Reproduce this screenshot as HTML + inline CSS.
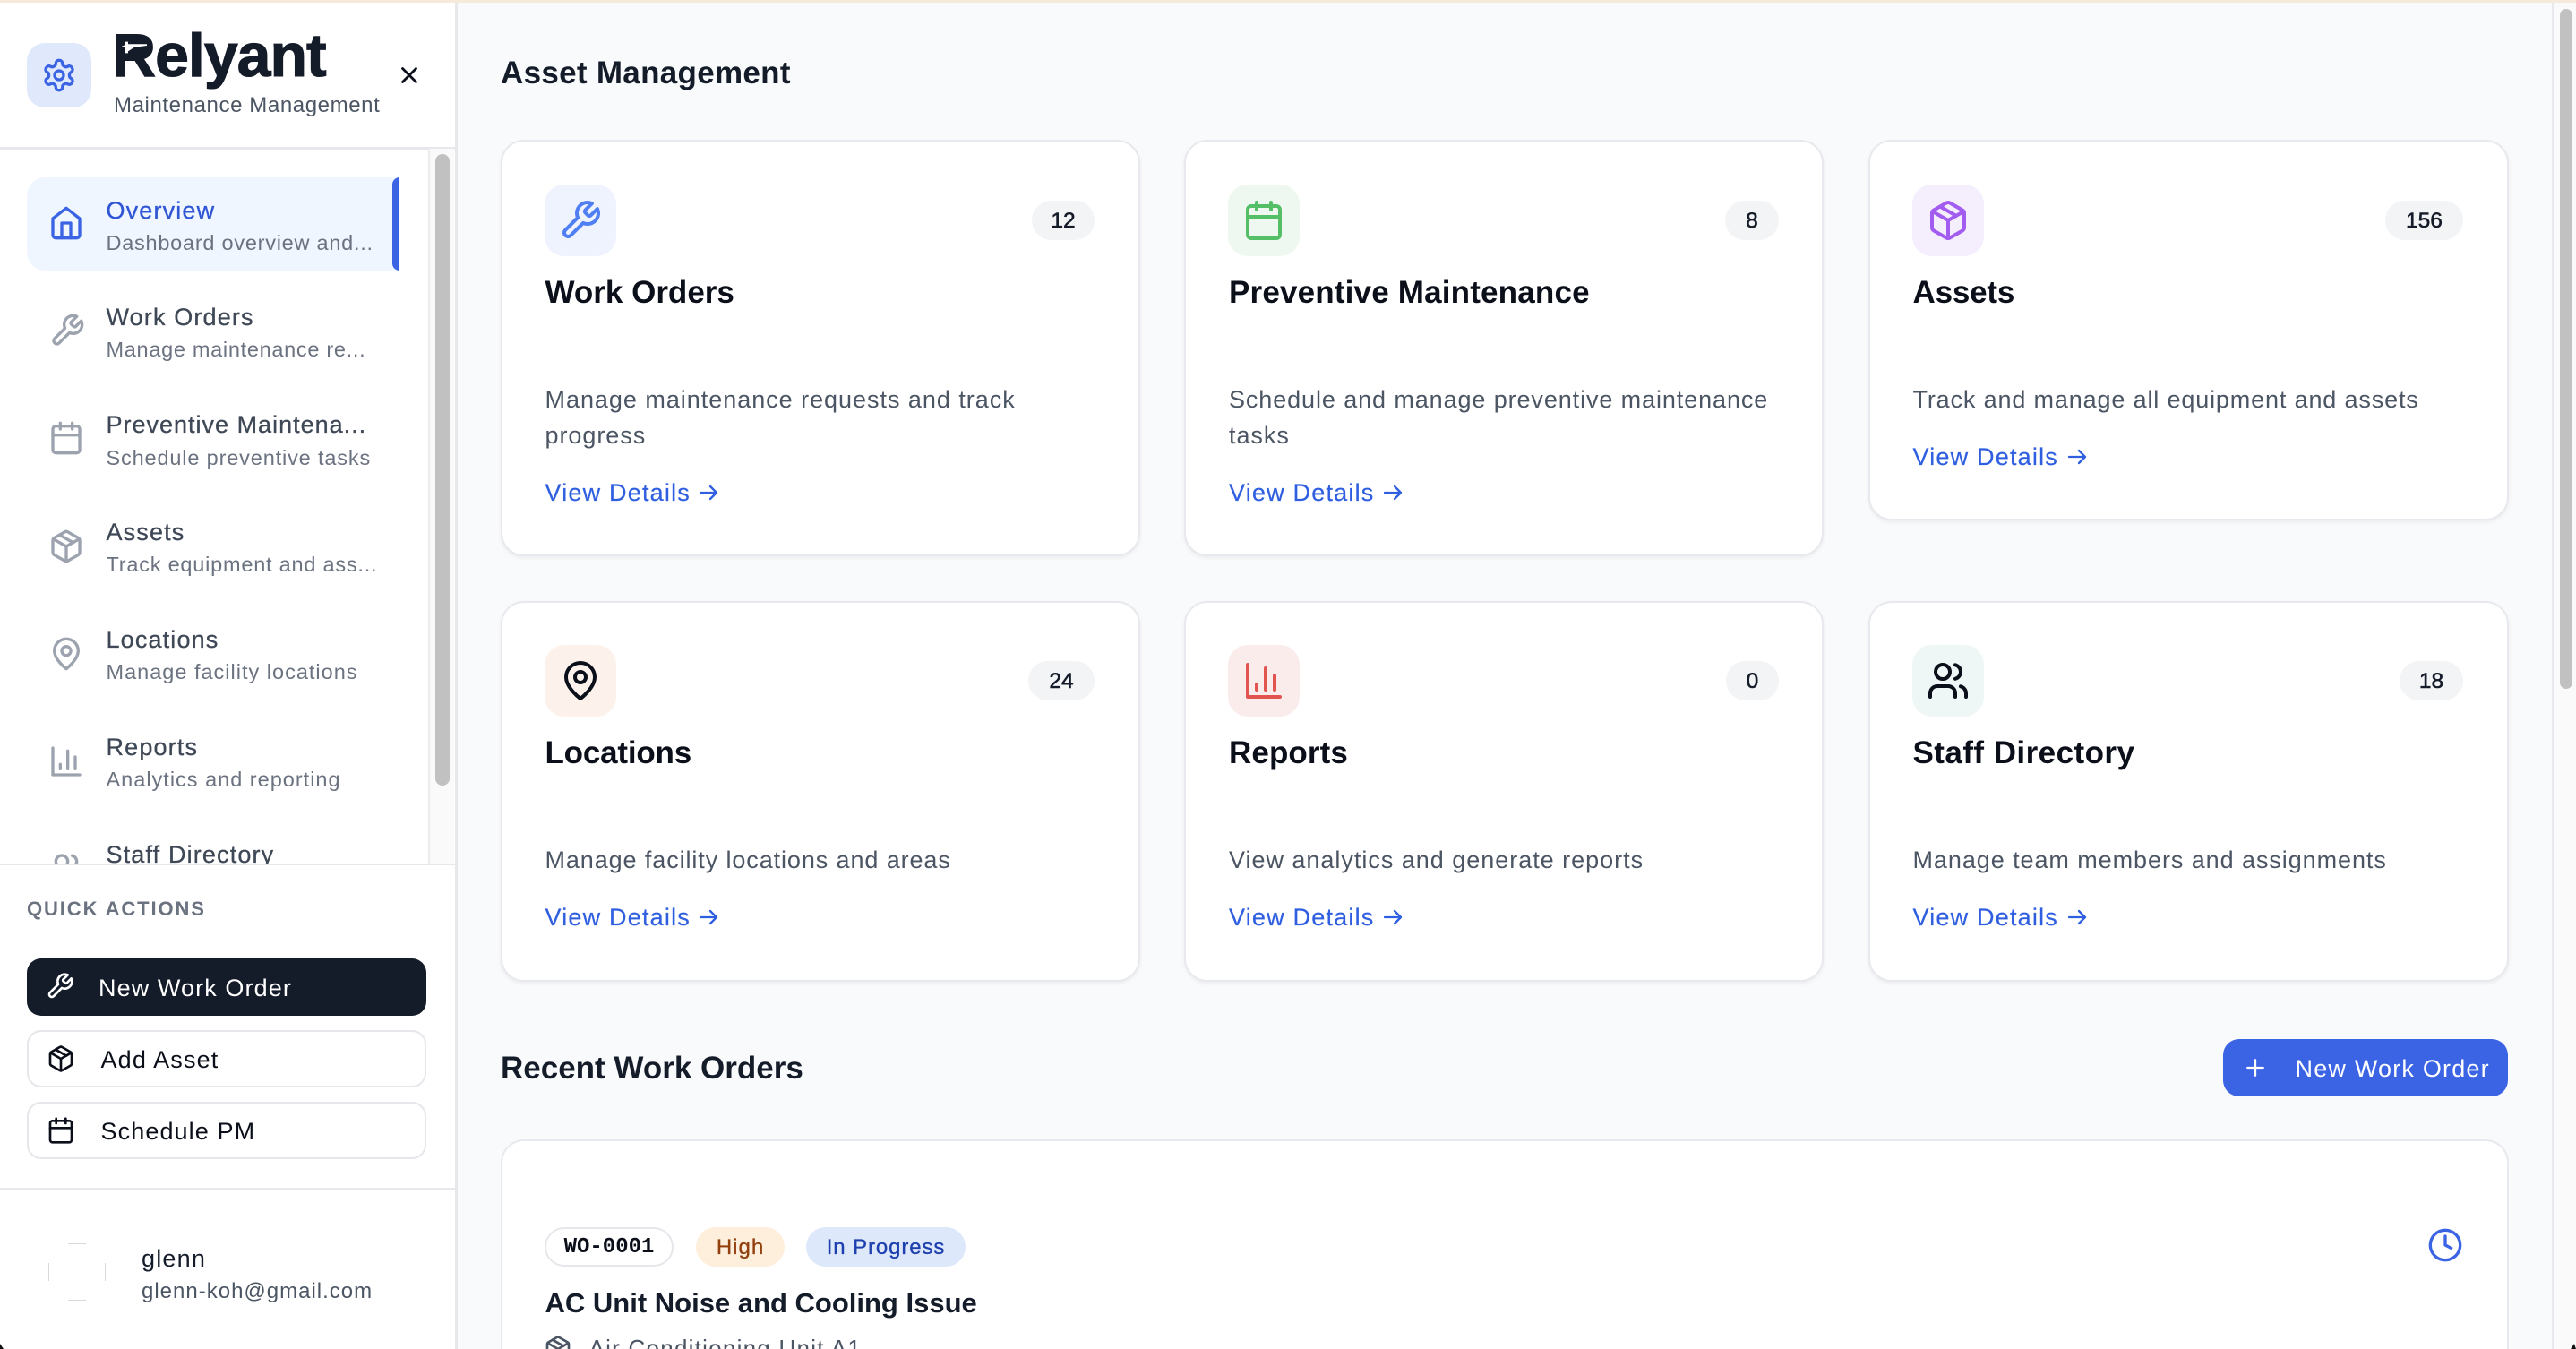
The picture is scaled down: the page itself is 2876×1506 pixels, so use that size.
<!DOCTYPE html>
<html lang="en">
<head>
<meta charset="utf-8">
<title>Relyant - Maintenance Management</title>
<style>
*{box-sizing:border-box;margin:0;padding:0}
html,body{width:2876px;height:1506px;overflow:hidden;background:#f9fafb;font-family:"Liberation Sans",sans-serif;color:#141b29}
#root{position:absolute;left:0;top:0;width:2876px;height:1506px;overflow:hidden;background:#f9fafb}
.a{position:absolute}
.t{position:absolute;white-space:nowrap;line-height:0;--k:.3465;top:calc(var(--b)*1px - var(--f)*var(--k)*1px);font-size:calc(var(--f)*1px)}
.ic{position:absolute;fill:none;stroke:currentColor;stroke-width:2;stroke-linecap:round;stroke-linejoin:round;overflow:visible}
.nt{--f:27;letter-spacing:1.15px;color:#3f4856;-webkit-text-stroke:.3px currentColor}
.ns{--f:23.5;letter-spacing:.75px;color:#6b7280}
.ni{color:#9ca3af;width:40px;height:40px;left:54px}
.card{position:absolute;background:#fff;border:2.5px solid #e8e9ee;border-radius:26px;box-shadow:0 2px 4px rgba(17,24,39,.06)}
.tile{position:absolute;width:80px;height:80px;border-radius:22px}
.cic{width:48px;height:48px}
.badge{position:absolute;height:44px;border-radius:22px;background:#f3f4f6;font-size:24.5px;line-height:46px;text-align:center;color:#141b29;-webkit-text-stroke:.55px currentColor}
.ct{--f:35;font-weight:700;color:#0b0f1a}
.cd{--f:27;letter-spacing:.95px;color:#4b5563}
.vd{--f:27;letter-spacing:1.2px;color:#2f5fe0;-webkit-text-stroke:.2px currentColor}
.arr{position:absolute;width:22px;height:18px;fill:none;stroke:#2f5fe0;stroke-width:2.3;stroke-linecap:round;stroke-linejoin:round}
.h2{--f:35;font-weight:700;color:#141b29}
.qa{position:absolute;left:30px;width:446px;height:64px;border-radius:16px;background:#fff;border:2px solid #e5e7eb}
.qt{--f:27;letter-spacing:1.15px;color:#0b0f1a}
.pill{position:absolute;top:1370px;height:44px;border-radius:22px;font-size:24px;line-height:46px;text-align:center}
</style>
</head>
<body>
<div id="root">
<svg width="0" height="0" style="position:absolute">
<symbol id="gear" viewBox="0 0 24 24"><path d="M12.22 2h-.44a2 2 0 0 0-2 2v.18a2 2 0 0 1-1 1.73l-.43.25a2 2 0 0 1-2 0l-.15-.08a2 2 0 0 0-2.73.73l-.22.38a2 2 0 0 0 .73 2.73l.15.1a2 2 0 0 1 1 1.72v.51a2 2 0 0 1-1 1.74l-.15.09a2 2 0 0 0-.73 2.73l.22.38a2 2 0 0 0 2.73.73l.15-.08a2 2 0 0 1 2 0l.43.25a2 2 0 0 1 1 1.73V20a2 2 0 0 0 2 2h.44a2 2 0 0 0 2-2v-.18a2 2 0 0 1 1-1.73l.43-.25a2 2 0 0 1 2 0l.15.08a2 2 0 0 0 2.73-.73l.22-.39a2 2 0 0 0-.73-2.73l-.15-.08a2 2 0 0 1-1-1.74v-.5a2 2 0 0 1 1-1.74l.15-.09a2 2 0 0 0 .73-2.73l-.22-.38a2 2 0 0 0-2.73-.73l-.15.08a2 2 0 0 1-2 0l-.43-.25a2 2 0 0 1-1-1.73V4a2 2 0 0 0-2-2z"/><circle cx="12" cy="12" r="3"/></symbol>
<symbol id="home" viewBox="0 0 24 24"><path d="m3 9 9-7 9 7v11a2 2 0 0 1-2 2H5a2 2 0 0 1-2-2z"/><polyline points="9 22 9 12 15 12 15 22"/></symbol>
<symbol id="wrench" viewBox="0 0 24 24"><path d="M14.7 6.3a1 1 0 0 0 0 1.4l1.6 1.6a1 1 0 0 0 1.4 0l3.77-3.77a6 6 0 0 1-7.94 7.94l-6.91 6.91a2.12 2.12 0 0 1-3-3l6.91-6.91a6 6 0 0 1 7.94-7.94l-3.76 3.76z"/></symbol>
<symbol id="cal" viewBox="0 0 24 24"><rect x="3" y="4" width="18" height="18" rx="2"/><path d="M16 2v4M8 2v4M3 10h18"/></symbol>
<symbol id="box" viewBox="0 0 24 24"><path d="m7.5 4.27 9 5.15"/><path d="M21 8a2 2 0 0 0-1-1.73l-7-4a2 2 0 0 0-2 0l-7 4A2 2 0 0 0 3 8v8a2 2 0 0 0 1 1.73l7 4a2 2 0 0 0 2 0l7-4A2 2 0 0 0 21 16Z"/><path d="m3.3 7 8.7 5 8.7-5"/><path d="M12 22V12"/></symbol>
<symbol id="pin" viewBox="0 0 24 24"><path d="M20 10c0 6-8 12-8 12s-8-6-8-12a8 8 0 0 1 16 0Z"/><circle cx="12" cy="10" r="3"/></symbol>
<symbol id="chart" viewBox="0 0 24 24"><path d="M3 3v18h18"/><path d="M18 17V9"/><path d="M13 17V5"/><path d="M8 17v-3"/></symbol>
<symbol id="users" viewBox="0 0 24 24"><path d="M16 21v-2a4 4 0 0 0-4-4H6a4 4 0 0 0-4 4v2"/><circle cx="9" cy="7" r="4"/><path d="M22 21v-2a4 4 0 0 0-3-3.87"/><path d="M16 3.13a4 4 0 0 1 0 7.75"/></symbol>
<symbol id="arrow" viewBox="0 0 22 18"><path d="M2 9h18M13 2l7 7-7 7"/></symbol>
</svg>

<!-- top accent line -->
<div class="a" style="left:0;top:0;width:2876px;height:3px;background:#f6ebda;z-index:5"></div>

<!-- main scrollbar -->
<div class="a" style="left:2849px;top:3px;width:27px;height:1503px;background:#fafafa;border-left:2px solid #e8e9ec"></div>
<div class="a" style="left:2858px;top:10px;width:14px;height:759px;background:#c1c1c1;border-radius:7px"></div>

<!-- main -->
<main>
<h1 class="t h2" style="--b:94;left:559px;letter-spacing:.3px">Asset Management</h1>

<div class="card" style="left:558.500px;top:156px;width:714px;height:465px"></div>
<div class="tile" style="left:608px;top:206px;background:#eef3fe"></div>
<svg class="ic cic" style="left:624px;top:222px;color:#4f7ff3"><use href="#wrench"/></svg>
<div class="badge" style="left:1152px;top:224px;width:70px">12</div>
<h3 class="t ct" style="--b:339.500;left:608.500px">Work Orders</h3>
<p class="t cd" style="--b:455;left:608.500px;letter-spacing:.97px">Manage maintenance requests and track</p>
<p class="t cd" style="--b:495;left:608.500px">progress</p>
<a class="t vd" style="--b:559;left:608.500px">View Details</a>
<svg class="arr" style="left:780px;top:541px"><use href="#arrow"/></svg>

<div class="card" style="left:1322px;top:156px;width:714px;height:465px"></div>
<div class="tile" style="left:1371px;top:206px;background:#eff8f0"></div>
<svg class="ic cic" style="left:1387px;top:222px;color:#55bf68"><use href="#cal"/></svg>
<div class="badge" style="left:1926px;top:224px;width:60px">8</div>
<h3 class="t ct" style="--b:339.500;left:1372px;letter-spacing:.18px">Preventive Maintenance</h3>
<p class="t cd" style="--b:455;left:1372px;letter-spacing:.9px">Schedule and manage preventive maintenance</p>
<p class="t cd" style="--b:495;left:1372px">tasks</p>
<a class="t vd" style="--b:559;left:1372px">View Details</a>
<svg class="arr" style="left:1544px;top:541px"><use href="#arrow"/></svg>

<div class="card" style="left:2085.500px;top:156px;width:715px;height:425px"></div>
<div class="tile" style="left:2135px;top:206px;background:#f4eefd"></div>
<svg class="ic cic" style="left:2151px;top:222px;color:#a35cf0"><use href="#box"/></svg>
<div class="badge" style="left:2663px;top:224px;width:87px">156</div>
<h3 class="t ct" style="--b:339.500;left:2135.500px;letter-spacing:-.2px">Assets</h3>
<p class="t cd" style="--b:455;left:2135.500px;letter-spacing:.85px">Track and manage all equipment and assets</p>
<a class="t vd" style="--b:519;left:2135.500px">View Details</a>
<svg class="arr" style="left:2308px;top:501px"><use href="#arrow"/></svg>

<div class="card" style="left:558.500px;top:670.500px;width:714px;height:425px"></div>
<div class="tile" style="left:608px;top:720px;background:#fdf2eb"></div>
<svg class="ic cic" style="left:624px;top:736px;color:#0b0f1a"><use href="#pin"/></svg>
<div class="badge" style="left:1148px;top:738px;width:74px">24</div>
<h3 class="t ct" style="--b:853.500;left:608.500px;letter-spacing:-.2px">Locations</h3>
<p class="t cd" style="--b:969;left:608.500px;letter-spacing:.9px">Manage facility locations and areas</p>
<a class="t vd" style="--b:1033;left:608.500px">View Details</a>
<svg class="arr" style="left:780px;top:1015px"><use href="#arrow"/></svg>

<div class="card" style="left:1322px;top:670.500px;width:714px;height:425px"></div>
<div class="tile" style="left:1371px;top:720px;background:#fbecec"></div>
<svg class="ic cic" style="left:1387px;top:736px;color:#e25450"><use href="#chart"/></svg>
<div class="badge" style="left:1927px;top:738px;width:59px">0</div>
<h3 class="t ct" style="--b:853.500;left:1372px;letter-spacing:.1px">Reports</h3>
<p class="t cd" style="--b:969;left:1372px;letter-spacing:.98px">View analytics and generate reports</p>
<a class="t vd" style="--b:1033;left:1372px">View Details</a>
<svg class="arr" style="left:1544px;top:1015px"><use href="#arrow"/></svg>

<div class="card" style="left:2085.500px;top:670.500px;width:715px;height:425px"></div>
<div class="tile" style="left:2135px;top:720px;background:#eef7f5"></div>
<svg class="ic cic" style="left:2151px;top:736px;color:#0b0f1a"><use href="#users"/></svg>
<div class="badge" style="left:2679px;top:738px;width:71px">18</div>
<h3 class="t ct" style="--b:853.500;left:2135.500px;letter-spacing:.45px">Staff Directory</h3>
<p class="t cd" style="--b:969;left:2135.500px;letter-spacing:.93px">Manage team members and assignments</p>
<a class="t vd" style="--b:1033;left:2135.500px">View Details</a>
<svg class="arr" style="left:2308px;top:1015px"><use href="#arrow"/></svg>

<h2 class="t h2" style="--b:1205;left:559px">Recent Work Orders</h2>
<div class="a" style="left:2482px;top:1160px;width:318px;height:64px;background:#3b64e4;border-radius:18px"></div>
<svg class="ic" viewBox="0 0 24 24" style="left:2503px;top:1177px;width:30px;height:30px;color:#fff;stroke-width:1.8"><path d="M5 12h14M12 5v14"/></svg>
<span class="t" style="--f:27;--b:1202;left:2562.500px;letter-spacing:1.2px;color:#fff">New Work Order</span>

<div class="card" style="left:558.500px;top:1272px;width:2242px;height:234px;border-bottom:0;border-radius:26px 26px 0 0;box-shadow:none"></div>
<div class="pill" style="left:608px;width:144px;background:#fff;border:2px solid #e5e7eb;font-family:'Liberation Mono',monospace;font-weight:700;color:#0b0f1a;line-height:42px">WO-0001</div>
<div class="pill" style="left:777px;width:99px;background:#feeedc;color:#92400e;letter-spacing:1px;-webkit-text-stroke:.3px currentColor">High</div>
<div class="pill" style="left:900px;width:178px;background:#dde8fb;color:#1e40af;letter-spacing:.9px;-webkit-text-stroke:.3px currentColor">In Progress</div>
<h3 class="t" style="--f:31;--b:1466;left:608.500px;font-weight:700;color:#141b29">AC Unit Noise and Cooling Issue</h3>
<div class="a" style="left:600px;top:1480px;width:400px;height:26px;overflow:hidden">
<svg class="ic" style="left:7px;top:10px;width:32px;height:32px;color:#4b5563"><use href="#box"/></svg>
<span class="t" style="--f:26;--b:34;left:57.500px;letter-spacing:1.25px;color:#4b5563">Air Conditioning Unit A1</span>
</div>
<svg class="ic" style="left:2710px;top:1370px;width:40px;height:40px;color:#3b64e4" viewBox="0 0 24 24"><circle cx="12" cy="12" r="10"/><polyline points="12 6 12 12 16 14"/></svg>
</main>

<!-- sidebar -->
<aside>
<div class="a" style="left:0;top:3px;width:511px;height:1503px;background:#fff;border-right:3px solid #e7e8ec"></div>
<div class="a" style="left:0;top:164px;width:508px;height:2.500px;background:#e7e8ec"></div>

<div class="a" style="left:30px;top:48px;width:72px;height:72px;background:#dfe9fb;border-radius:20px"></div>
<svg class="ic" style="left:46px;top:64px;width:40px;height:40px;color:#3b64e4"><use href="#gear"/></svg>
<div class="t" style="--f:68;--b:86;left:125px;font-weight:700;letter-spacing:-1px;color:#141b29;-webkit-text-stroke:1.1px currentColor">Relyant</div>
<svg class="a" style="left:127px;top:36px;width:50px;height:40px" viewBox="0 0 50 40"><rect x="16" y="8" width="17" height="17" fill="#141b29"/><path d="M9 15.700L14.700 13.300L37 13.300L37 15L23 16.700L13 23.300L15.300 19L13.700 17L9 16.700Z" fill="#fff"/></svg>
<div class="t" style="--f:24;--b:126;left:127px;letter-spacing:.6px;color:#4b5563">Maintenance Management</div>
<svg class="ic" viewBox="0 0 24 24" style="left:442px;top:69px;width:30px;height:30px;color:#0b0f1a;stroke-width:2.2"><path d="M18 6 6 18M6 6l12 12"/></svg>

<!-- nav scrollbar -->
<div class="a" style="left:478px;top:166px;width:29px;height:798px;background:#fafafa;border-left:2px solid #ececef"></div>
<div class="a" style="left:486px;top:172px;width:16px;height:705px;background:#c1c1c1;border-radius:8px"></div>

<nav>
<div class="a" style="left:30px;top:198px;width:416px;height:104px;background:#eff6ff;border-radius:20px 10px 10px 20px"></div>
<div class="a" style="left:438px;top:198px;width:8px;height:104px;background:#3b64e4;border-radius:8px 0 0 8px"></div>
<svg class="ic ni" style="top:229px;color:#3b64e4"><use href="#home"/></svg>
<div class="t nt" style="--b:244;left:118.500px;color:#2f55d4">Overview</div>
<div class="t ns" style="--b:279;left:118.500px">Dashboard overview and...</div>

<svg class="ic ni" style="top:349px;left:55px"><use href="#wrench"/></svg>
<div class="t nt" style="--b:363.500;left:118.500px">Work Orders</div>
<div class="t ns" style="--b:398.500;left:118.500px;letter-spacing:.7px">Manage maintenance re...</div>

<svg class="ic ni" style="top:469px"><use href="#cal"/></svg>
<div class="t nt" style="--b:483;left:118.500px;letter-spacing:1px">Preventive Maintena...</div>
<div class="t ns" style="--b:519;left:118.500px;letter-spacing:.85px">Schedule preventive tasks</div>

<svg class="ic ni" style="top:590px"><use href="#box"/></svg>
<div class="t nt" style="--b:603;left:118.500px">Assets</div>
<div class="t ns" style="--b:638;left:118.500px;letter-spacing:.78px">Track equipment and ass...</div>

<svg class="ic ni" style="top:710px"><use href="#pin"/></svg>
<div class="t nt" style="--b:723;left:118.500px">Locations</div>
<div class="t ns" style="--b:758;left:118.500px;letter-spacing:1px">Manage facility locations</div>

<svg class="ic ni" style="top:830px"><use href="#chart"/></svg>
<div class="t nt" style="--b:843;left:118.500px">Reports</div>
<div class="t ns" style="--b:878;left:118.500px;letter-spacing:1px">Analytics and reporting</div>

<svg class="ic ni" style="top:950px"><use href="#users"/></svg>
<div class="t nt" style="--b:963;left:118.500px">Staff Directory</div>
</nav>

<!-- bottom panel -->
<div class="a" style="left:0;top:964px;width:508px;height:542px;background:#fff;border-top:2.500px solid #e7e8ec"></div>
<div class="t" style="--f:22;--b:1023;left:30px;font-weight:700;letter-spacing:1.9px;color:#6b7280">QUICK ACTIONS</div>

<div class="a" style="left:30px;top:1070px;width:446px;height:64px;background:#141b29;border-radius:16px"></div>
<svg class="ic" style="left:51px;top:1085px;width:32px;height:32px;color:#fff"><use href="#wrench"/></svg>
<div class="t qt" style="--b:1112;left:110px;color:#fff;letter-spacing:1.1px">New Work Order</div>

<div class="qa" style="top:1150px"></div>
<svg class="ic" style="left:52px;top:1166px;width:32px;height:32px;color:#0b0f1a"><use href="#box"/></svg>
<div class="t qt" style="--b:1192;left:112.500px">Add Asset</div>

<div class="qa" style="top:1230px"></div>
<svg class="ic" style="left:52px;top:1246px;width:32px;height:32px;color:#0b0f1a"><use href="#cal"/></svg>
<div class="t qt" style="--b:1272;left:112.500px;letter-spacing:1.1px">Schedule PM</div>

<div class="a" style="left:0;top:1326px;width:508px;height:2px;background:#e7e8ec"></div>

<div class="a" style="left:76px;top:1388px;width:20px;height:1px;background:#d9d9d9"></div>
<div class="a" style="left:76px;top:1451px;width:20px;height:1px;background:#d9d9d9"></div>
<div class="a" style="left:54px;top:1410px;width:1px;height:20px;background:#d9d9d9"></div>
<div class="a" style="left:117px;top:1410px;width:1px;height:20px;background:#d9d9d9"></div>
<div class="t" style="--f:27;--b:1414;left:158px;letter-spacing:1.2px;color:#141b29">glenn</div>
<div class="t" style="--f:24;--b:1450;left:158px;letter-spacing:1px;color:#4b5563">glenn-koh@gmail.com</div>
</aside>

<!-- cursor fragments at the capture edges -->
<svg class="a" style="left:0;top:1500px;width:5px;height:6px" viewBox="0 0 5 6"><path d="M0 0L4 6H0Z" fill="#111"/></svg>
<svg class="a" style="left:2870px;top:1500px;width:6px;height:6px" viewBox="0 0 6 6"><path d="M4 0L6 6H0Z" fill="#111"/></svg>
</div>
</body>
</html>
